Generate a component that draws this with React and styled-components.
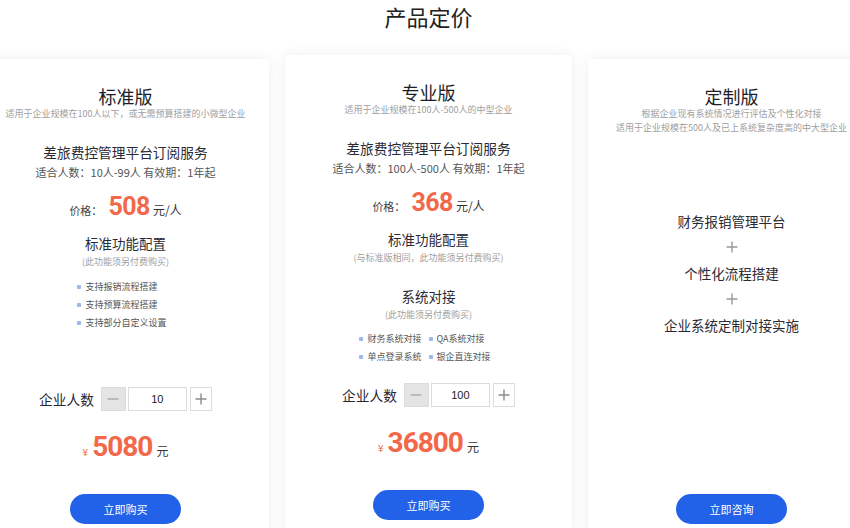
import React from "react";
import styled, { createGlobalStyle } from "styled-components";

const GlobalStyle = createGlobalStyle`
  body {
    margin: 0;
    background: #fff;
    overflow: hidden;
    font-family: "Noto Sans CJK SC", "Noto Sans", sans-serif;
    color: #222;
  }
`;

// Page wrapper, shifted a little to match the original centring
const Page = styled.div`
  padding-left: 7px;
`;

const Heading = styled.h1`
  margin: 0;
  padding-top: 1px;
  font-size: 22px;
  line-height: 30px;
  font-weight: 400;
  text-align: center;
  color: #222;
`;

const CardRow = styled.div`
  display: flex;
  justify-content: center;
  gap: 16px;
  margin-top: 28px;
`;

const Card = styled.div`
  flex-shrink: 0;
  box-sizing: border-box;
  width: 287px;
  height: 480px;
  padding: 26px 0 15px;
  background: #fff;
  border-radius: 4px;
  box-shadow: 0 0 14px rgba(0, 0, 0, 0.07);
  display: flex;
  flex-direction: column;
  align-items: center;
  text-align: center;
  transform: translateY(${props => (props.$raised ? "-4px" : "0")});
`;

const PlanName = styled.div`
  font-size: 18px;
  line-height: 22px;
  color: #1e1e28;
`;

const PlanNote = styled.div`
  font-size: 9px;
  line-height: 14px;
  color: #a0a0a0;
  white-space: nowrap;
`;

const ServiceTitle = styled.div`
  margin-top: 21px;
  font-size: 13.7px;
  line-height: 20px;
  color: #2a2a35;
`;

const Period = styled.div`
  margin-top: 2px;
  font-size: 11px;
  line-height: 16px;
  color: #555;
`;

const PriceRow = styled.div`
  margin-top: 11px;
  height: 32px;
  line-height: 32px;
  display: flex;
  align-items: baseline;
`;

const PriceLabel = styled.span`
  font-size: 11px;
  color: #444;
  margin-right: 6px;
`;

const PriceNumber = styled.span`
  font-family: Roboto, "Liberation Sans", sans-serif;
  font-weight: 700;
  font-size: 25px;
  letter-spacing: -0.5px;
  color: #f2684a;
`;

const PriceUnit = styled.span`
  font-size: 12px;
  color: #333;
  margin-left: 3px;
`;

const SectionTitle = styled.div`
  margin-top: ${props => props.$gap}px;
  font-size: 13.5px;
  line-height: 20px;
  color: #2a2a35;
`;

const SectionNote = styled.div`
  margin-top: 2px;
  font-size: 9px;
  line-height: 14px;
  color: #a0a0a0;
`;

const BulletList = styled.div`
  margin-top: ${props => props.$gap}px;
  display: grid;
  grid-template-columns: repeat(${props => props.$cols}, auto);
  text-align: left;
`;

const Bullet = styled.div`
  display: flex;
  align-items: center;
  gap: 4px;
  padding-right: 7px;
  font-size: 9px;
  line-height: 18px;
  color: #555;

  &::before {
    content: "";
    width: 4px;
    height: 4px;
    border-radius: 1px;
    background: #9db6ee;
  }
`;

const Bottom = styled.div`
  margin-top: auto;
  display: flex;
  flex-direction: column;
  align-items: center;
`;

const CounterRow = styled.div`
  display: flex;
  align-items: center;
`;

const CounterLabel = styled.span`
  font-size: 13.7px;
  line-height: 24px;
  color: #2a2a35;
  margin-right: 7px;
`;

const StepButton = styled.button`
  box-sizing: border-box;
  width: ${props => props.$width}px;
  height: 24px;
  padding: 0;
  border: 1px solid #dcdcdc;
  background: ${props => (props.$muted ? "#e4e4e4" : "#fff")};
  display: flex;
  align-items: center;
  justify-content: center;
  cursor: pointer;

  svg {
    width: 12px;
    height: 12px;
  }
`;

const CountInput = styled.input`
  box-sizing: border-box;
  width: 59px;
  height: 24px;
  margin: 0 3px 0 2px;
  border: 1px solid #dcdcdc;
  text-align: center;
  font-family: "Liberation Sans", Arial, sans-serif;
  font-size: 11px;
  color: #222;
  outline: none;
`;

const Total = styled.div`
  margin-top: 18px;
  height: 36px;
  line-height: 36px;
  display: flex;
  align-items: baseline;
`;

const Currency = styled.span`
  font-size: 10px;
  color: #f2684a;
  margin-right: 4px;
`;

const TotalNumber = styled.span`
  font-family: Roboto, "Liberation Sans", sans-serif;
  font-weight: 700;
  font-size: 28px;
  letter-spacing: -1px;
  color: #f2684a;
`;

const TotalUnit = styled.span`
  font-size: 12px;
  color: #333;
  margin-left: 4px;
`;

const ActionButton = styled.button`
  margin-top: ${props => props.$gap}px;
  width: 111px;
  height: 30px;
  border: none;
  border-radius: 15px;
  background: #2262e9;
  color: #fff;
  font-family: "Noto Sans CJK SC", sans-serif;
  font-size: 11px;
  cursor: pointer;
`;

const CustomList = styled.div`
  margin-top: 73px;
  display: flex;
  flex-direction: column;
  align-items: center;
`;

const CustomItem = styled.div`
  height: 26px;
  line-height: 26px;
  font-size: 13.5px;
  color: #2a2a35;
  display: flex;
  align-items: center;

  svg {
    width: 12px;
    height: 12px;
  }
`;

const PlusIcon = ({ color = "#8c8c8c" }) => (
  <svg viewBox="0 0 12 12">
    <path d="M6 0.5v11M0.5 6h11" stroke={color} strokeWidth="1.4" fill="none" />
  </svg>
);

const MinusIcon = () => (
  <svg viewBox="0 0 12 12">
    <path d="M0.5 6h11" stroke="#a8a8a8" strokeWidth="1.4" fill="none" />
  </svg>
);

function Counter({ value }) {
  return (
    <CounterRow>
      <CounterLabel>企业人数</CounterLabel>
      <StepButton $width={25} $muted>
        <MinusIcon />
      </StepButton>
      <CountInput defaultValue={value} />
      <StepButton $width={22}>
        <PlusIcon />
      </StepButton>
    </CounterRow>
  );
}

function Price({ value }) {
  return (
    <PriceRow>
      <PriceLabel>价格：</PriceLabel>
      <PriceNumber>{value}</PriceNumber>
      <PriceUnit>元/人</PriceUnit>
    </PriceRow>
  );
}

function Purchase({ count, total }) {
  return (
    <Bottom>
      <Counter value={count} />
      <Total>
        <Currency>¥</Currency>
        <TotalNumber>{total}</TotalNumber>
        <TotalUnit>元</TotalUnit>
      </Total>
      <ActionButton $gap={29}>立即购买</ActionButton>
    </Bottom>
  );
}

export default function App() {
  return (
    <Page>
      <GlobalStyle />
      <Heading>产品定价</Heading>
      <CardRow>
        <Card>
          <PlanName>标准版</PlanName>
          <PlanNote>适用于企业规模在100人以下，或无需预算搭建的小微型企业</PlanNote>
          <ServiceTitle>差旅费控管理平台订阅服务</ServiceTitle>
          <Period>适合人数：10人-99人 有效期：1年起</Period>
          <Price value="508" />
          <SectionTitle $gap={10}>标准功能配置</SectionTitle>
          <SectionNote>(此功能须另付费购买)</SectionNote>
          <BulletList $cols={1} $gap={9}>
            <Bullet>支持报销流程搭建</Bullet>
            <Bullet>支持预算流程搭建</Bullet>
            <Bullet>支持部分自定义设置</Bullet>
          </BulletList>
          <Purchase count="10" total="5080" />
        </Card>

        <Card $raised>
          <PlanName>专业版</PlanName>
          <PlanNote>适用于企业规模在100人-500人的中型企业</PlanNote>
          <ServiceTitle>差旅费控管理平台订阅服务</ServiceTitle>
          <Period>适合人数：100人-500人 有效期：1年起</Period>
          <Price value="368" />
          <SectionTitle $gap={10}>标准功能配置</SectionTitle>
          <SectionNote>(与标准版相同，此功能须另付费购买)</SectionNote>
          <SectionTitle $gap={21}>系统对接</SectionTitle>
          <SectionNote>(此功能须另付费购买)</SectionNote>
          <BulletList $cols={2} $gap={8}>
            <Bullet>财务系统对接</Bullet>
            <Bullet>QA系统对接</Bullet>
            <Bullet>单点登录系统</Bullet>
            <Bullet>银企直连对接</Bullet>
          </BulletList>
          <Purchase count="100" total="36800" />
        </Card>

        <Card>
          <PlanName>定制版</PlanName>
          <PlanNote>根据企业现有系统情况进行评估及个性化对接</PlanNote>
          <PlanNote>适用于企业规模在500人及已上系统复杂度高的中大型企业</PlanNote>
          <CustomList>
            <CustomItem>财务报销管理平台</CustomItem>
            <CustomItem>
              <PlusIcon color="#999" />
            </CustomItem>
            <CustomItem>个性化流程搭建</CustomItem>
            <CustomItem>
              <PlusIcon color="#999" />
            </CustomItem>
            <CustomItem>企业系统定制对接实施</CustomItem>
          </CustomList>
          <Bottom>
            <ActionButton $gap={0}>立即咨询</ActionButton>
          </Bottom>
        </Card>
      </CardRow>
    </Page>
  );
}
